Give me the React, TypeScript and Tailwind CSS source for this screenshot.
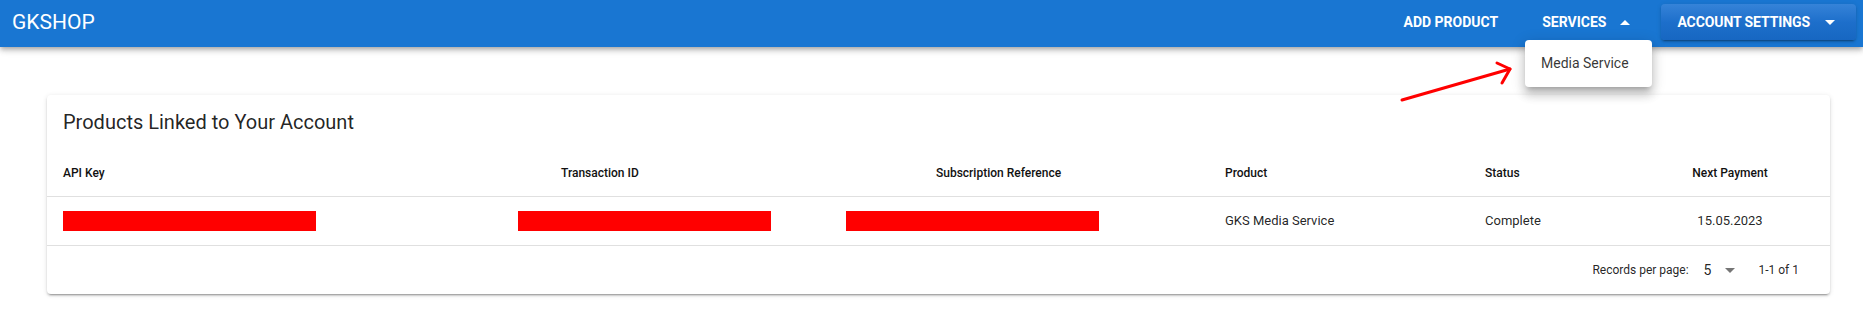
import React from "react";

const Caret = ({ up = false, className = "" }: { up?: boolean; className?: string }) => (
  <svg width="10" height="5" viewBox="0 0 10 5" className={className}>
    <polygon points={up ? "0,5 5,0 10,5" : "0,0 10,0 5,5"} fill="currentColor" />
  </svg>
);

const headers = [
  { label: "API Key", cls: "pl-4" },
  { label: "Transaction ID", cls: "pl-[59px]" },
  { label: "Subscription Reference", cls: "pl-[106px]" },
  { label: "Product", cls: "pl-4" },
  { label: "Status", cls: "pl-4" },
  { label: "Next Payment", cls: "justify-center" },
];

export default function App() {
  return (
    <div className="relative h-[309px] w-full overflow-hidden bg-white font-['Roboto',sans-serif] text-[rgba(0,0,0,0.87)]">
      {/* app bar */}
      <header className="relative z-10 flex h-[47px] items-center bg-[#1976d2] pb-[3px] pl-3 pr-[7px] text-white shadow-[0_2px_4px_-1px_rgba(0,0,0,0.2),0_4px_5px_0_rgba(0,0,0,0.14),0_1px_10px_0_rgba(0,0,0,0.12)]">
        <div className="text-[21px] leading-none">GKSHOP</div>
        <nav className="ml-auto flex items-center text-[14px] font-bold">
          <button className="px-4 uppercase">Add Product</button>
          <button className="ml-[12px] flex items-center pl-4 uppercase">
            Services
            <Caret up className="ml-[14px]" />
          </button>
          <button className="ml-[31px] flex h-[36px] items-center rounded bg-gradient-to-b from-[#3583d8] via-[#1d6fcb] to-[#1767c2] pl-4 pr-[21px] uppercase shadow-[0_3px_1px_-2px_rgba(0,0,0,0.2),0_2px_2px_0_rgba(0,0,0,0.14),0_1px_5px_0_rgba(0,0,0,0.12)]">
            <span className="tracking-[-0.1px]">Account Settings</span>
            <Caret className="ml-[15px]" />
          </button>
        </nav>
      </header>

      {/* card */}
      <div className="ml-[47px] mr-[33px] mt-[48px] rounded bg-white shadow-[0_3px_1px_-2px_rgba(0,0,0,0.2),0_2px_2px_0_rgba(0,0,0,0.14),0_1px_5px_0_rgba(0,0,0,0.12)]">
        <div className="px-4 pb-[11px] pt-[11px] text-[20px] leading-8">Products Linked to Your Account</div>
        <div className="grid grid-cols-[455px_328px_379px_260px_161px_1fr]">
          {headers.map((h) => (
            <div key={h.label} className={`flex h-[48px] items-center border-b border-[#e0e0e0] text-[12px] font-medium text-[#111] ${h.cls}`}>
              {h.label}
            </div>
          ))}
          <div className="flex h-[49px] items-center border-b border-[#e0e0e0] pl-4">
            <div className="h-[20px] w-[253px] bg-[#ff0000]" />
          </div>
          <div className="flex h-[49px] items-center border-b border-[#e0e0e0] pl-4">
            <div className="h-[20px] w-[253px] bg-[#ff0000]" />
          </div>
          <div className="flex h-[49px] items-center border-b border-[#e0e0e0] pl-4">
            <div className="h-[20px] w-[253px] bg-[#ff0000]" />
          </div>
          <div className="flex h-[49px] items-center border-b border-[#e0e0e0] pl-4 text-[13px]">GKS Media Service</div>
          <div className="flex h-[49px] items-center border-b border-[#e0e0e0] pl-4 text-[13px]">Complete</div>
          <div className="flex h-[49px] items-center justify-center border-b border-[#e0e0e0] text-[13px]">15.05.2023</div>
        </div>
        <div className="flex h-[48px] items-center justify-end pr-[31px] text-[12px]">
          <span>Records per page:</span>
          <span className="ml-[15px] text-[14px]">5</span>
          <Caret className="ml-[14px] text-[#757575]" />
          <span className="ml-[23px]">1-1 of 1</span>
        </div>
      </div>

      {/* services dropdown */}
      <div className="absolute left-[1525px] top-[40px] z-20 flex h-[47px] w-[127px] items-center rounded bg-white pl-4 text-[14px] text-[rgba(0,0,0,0.8)] shadow-[0_5px_5px_-3px_rgba(0,0,0,0.2),0_8px_10px_1px_rgba(0,0,0,0.14),0_3px_14px_2px_rgba(0,0,0,0.12)]">
        Media Service
      </div>

      {/* annotation arrow */}
      <svg className="absolute left-0 top-0 z-30" width="1863" height="309" viewBox="0 0 1863 309">
        <g stroke="#ff0000" strokeWidth="3" fill="none" strokeLinecap="round" strokeLinejoin="round">
          <line x1="1402" y1="100" x2="1510" y2="69" />
          <polyline points="1497,63 1510,69 1502,83" />
        </g>
      </svg>
    </div>
  );
}
